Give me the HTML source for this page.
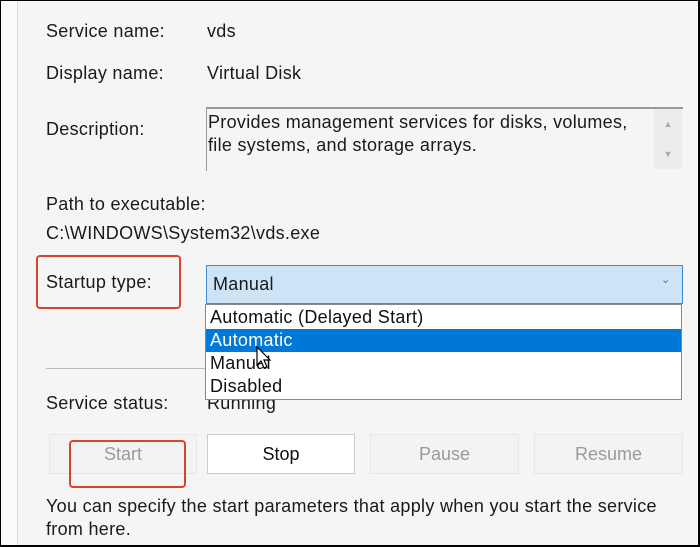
<!DOCTYPE html><html><head><style>
body{margin:0;width:700px;height:547px;background:#000;font-family:"Liberation Sans",sans-serif;position:relative;overflow:hidden}
.win{position:absolute;left:1px;top:1px;width:697px;height:544px;background:#f5f5f5}
.strip{position:absolute;left:0;top:0;width:16px;height:544px;background:#fbfbfb;border-right:1px solid #ddd}
.t{position:absolute;font-size:18px;color:#1a1a1a;white-space:nowrap;letter-spacing:0.3px}
.box{position:absolute}
.btn{position:absolute;top:433px;height:38px;border:1px solid #e6e6e6;background:#f3f3f3;font-size:18px;color:#9a9a9a;text-align:center;line-height:38px}
.red{position:absolute;border:2px solid #d9442f;border-radius:4px}
.it{position:absolute;left:0;width:100%;height:23px;line-height:23px;padding-left:4px;font-size:18px;letter-spacing:0.3px;color:#111;box-sizing:border-box}
</style></head><body><div class="win">
<div class="strip"></div>
<div class="t" style="left:45px;top:20px">Service name:</div>
<div class="t" style="left:206px;top:20px">vds</div>
<div class="t" style="left:45px;top:62px">Display name:</div>
<div class="t" style="left:206px;top:62px">Virtual Disk</div>
<div class="t" style="left:45px;top:118px">Description:</div>
<div class="box" style="left:205px;top:106px;width:476px;height:62px;border-top:2px solid #999;border-left:1px solid #999;background:#f5f5f5"></div>
<div class="box" style="left:653px;top:108px;width:28px;height:60px;background:#ececec;color:#aaa;font-size:9px;text-align:center;line-height:30px">▲<br>▼</div>
<div class="t" style="left:207px;top:110px;line-height:23px">Provides management services for disks, volumes,<br>file systems, and storage arrays.</div>
<div class="t" style="left:45px;top:193px">Path to executable:</div>
<div class="t" style="left:45px;top:222px">C:\WINDOWS\System32\vds.exe</div>
<div class="red" style="left:35px;top:254px;width:141px;height:50px"></div>
<div class="t" style="left:45px;top:271px">Startup type:</div>
<div class="box" style="left:205px;top:264px;width:475px;height:37px;background:#cde4f7;border:1px solid #3c8fd6"></div>
<div class="t" style="left:212px;top:273px">Manual</div>
<div class="t" style="left:660px;top:272px;font-size:11px;color:#666">⌄</div>
<div class="box" style="left:45px;top:367px;width:160px;height:1px;background:#bbb"></div>
<div class="t" style="left:45px;top:392px">Service status:</div>
<div class="t" style="left:206px;top:392px">Running</div>
<div class="box" style="left:204px;top:303px;width:475px;height:94px;background:#fff;border:1px solid #888">
<div class="it" style="top:1px">Automatic (Delayed Start)</div>
<div class="it" style="top:24px;background:#0078d7;color:#fff">Automatic</div>
<div class="it" style="top:47px">Manual</div>
<div class="it" style="top:70px">Disabled</div>
</div>
<svg style="position:absolute;left:255px;top:345px" width="16" height="24"><path d="M1 1 L1 19 L5 15 L8 22 L11 21 L8 14 L14 14 Z" fill="#fff" stroke="#000" stroke-width="1.2"/></svg>
<div class="btn" style="left:48px;width:146px">Start</div>
<div class="btn" style="left:206px;width:146px;background:#fff;color:#111;border-color:#ccc">Stop</div>
<div class="btn" style="left:369px;width:147px">Pause</div>
<div class="btn" style="left:533px;width:147px">Resume</div>
<div class="red" style="left:68px;top:439px;width:113px;height:44px"></div>
<div class="t" style="left:45px;top:494px;line-height:23px">You can specify the start parameters that apply when you start the service<br>from here.</div>
</div></body></html>
